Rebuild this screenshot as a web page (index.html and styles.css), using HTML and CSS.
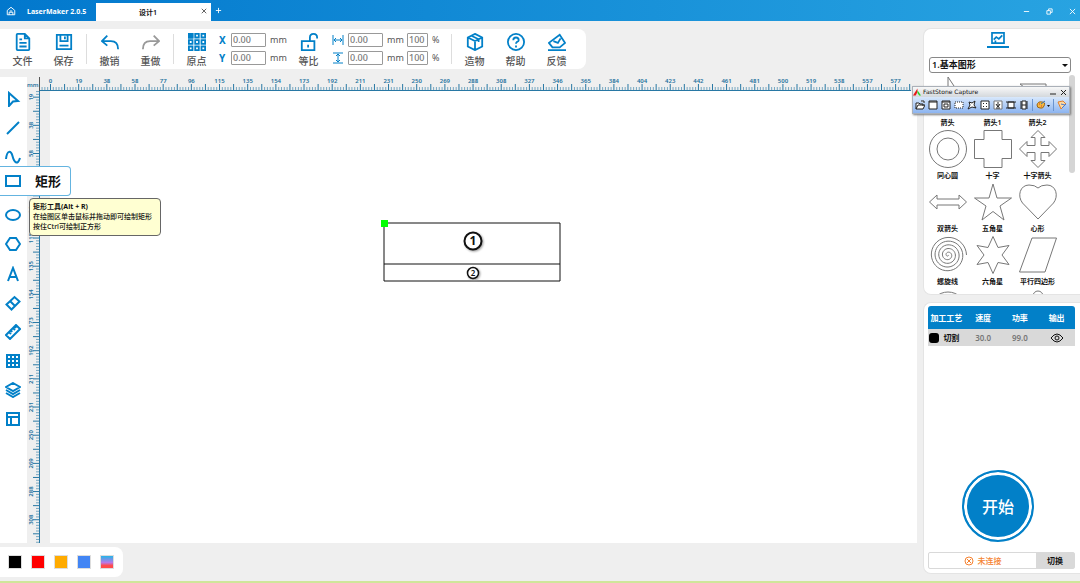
FILE: index.html
```html
<!DOCTYPE html>
<html lang="zh-CN">
<head>
  <meta charset="UTF-8">
  <title>LaserMaker 2.0.5</title>
  <link rel="stylesheet" href="styles.css">
</head>
<body>
<header class="titlebar">
  <svg class="home" viewBox="0 0 16 16"><path d="M2 7l6-5 6 5v7H2zM5 14v-4h6v4M6 8h4"/></svg>
  <h1>LaserMaker 2.0.5</h1>
  <div class="tab">
    <span>设计1</span>
    <button class="tab-close" aria-label="关闭标签"><svg viewBox="0 0 8 8"><path d="M1 1l6 6M7 1L1 7"/></svg></button>
  </div>
  <button class="tab-add" aria-label="新建"><svg viewBox="0 0 8 8"><path d="M4 1v6M1 4h6"/></svg></button>
  <div class="window-buttons">
    <button aria-label="最小化"><svg viewBox="0 0 8 8"><path d="M1 4h6"/></svg></button>
    <button aria-label="还原"><svg viewBox="0 0 8 8"><path d="M1 3h4v4H1zM3 3V1h4v4H5"/></svg></button>
    <button aria-label="关闭"><svg viewBox="0 0 8 8"><path d="M1 1l6 6M7 1L1 7"/></svg></button>
  </div>
</header>

<div class="app">
  <main class="editor">
    <div class="toolbar">
      <button class="tool"><svg viewBox="0 0 20 20"><path d="M3 2q0-1 1-1h8l5 5v12q0 1-1 1H4q-1 0-1-1zM12 1v5h5M6 7h3M6 11h8M6 15h8"/></svg>文件</button>
      <button class="tool"><svg viewBox="0 0 20 20"><path d="M2 2h16v16H2zM6 2v7h8V2M11 4v3M5 14h10"/></svg>保存</button>
      <span class="sep"></span>
      <button class="tool"><svg viewBox="0 0 20 20"><path d="M7 3L1 9l6 5M1 9h10q8 0 8 9"/></svg>撤销</button>
      <button class="tool redo"><svg viewBox="0 0 20 20"><path d="M13 3l6 6-6 5M19 9H9q-8 0-8 9"/></svg>重做</button>
      <span class="sep"></span>
      <button class="tool"><svg viewBox="0 0 20 20"><path class="solid" d="M1 1h4v4H1z"/><path d="M1 1h4v4H1zM8 1h4v4H8zM15 1h4v4h-4zM1 8h4v4H1zM8 8h4v4H8zM15 8h4v4h-4zM1 15h4v4H1zM8 15h4v4H8zM15 15h4v4h-4z"/></svg>原点</button>
      <div class="fields position">
        <label for="pos-x">X</label><input id="pos-x" value="0.00"><span>mm</span>
        <label for="pos-y">Y</label><input id="pos-y" value="0.00"><span>mm</span>
      </div>
      <button class="tool"><svg viewBox="0 0 20 20"><path d="M2 9h14v10H2zM9 13v3M11 9V5q0-4 4-4t4 4v1"/></svg>等比</button>
      <div class="fields size">
        <label for="width" aria-label="宽度"><svg viewBox="0 0 12 12"><path d="M1 1v10M11 1v10M2 6h8M4 4L2 6l2 2M8 4l2 2-2 2"/></svg></label>
        <input id="width" value="0.00"><span>mm</span><input class="percent" value="100" aria-label="宽度百分比"><span>%</span>
        <label for="height" aria-label="高度"><svg viewBox="0 0 12 12"><path d="M1 1h10M1 11h10M6 2v8M4 4l2-2 2 2M4 8l2 2 2-2"/></svg></label>
        <input id="height" value="0.00"><span>mm</span><input class="percent" value="100" aria-label="高度百分比"><span>%</span>
      </div>
      <span class="sep"></span>
      <button class="tool"><svg viewBox="0 0 20 20"><path d="M10 1l8 4v10l-8 4-8-4V5zM2 5l8 4 8-4M10 9v10M6 3l8 4v3"/></svg>造物</button>
      <button class="tool"><svg viewBox="0 0 20 20"><circle cx="10" cy="10" r="9"/><path d="M7 8q0-3 3-3t3 3q0 1-2 2-1 1-1 2M10 14v2"/></svg>帮助</button>
      <button class="tool"><svg viewBox="0 0 20 20"><path d="M0 19h20M5 16l-4-5L13 2l6 9-6 5zM6 9l5 2 3-5"/></svg>反馈</button>
    </div>

    <div class="workspace">
      <nav class="side-tools">
        <button aria-label="选择"><svg viewBox="0 0 16 16"><path d="M4 2l9 8-5 .5L4 15z"/></svg></button>
        <button aria-label="直线"><svg viewBox="0 0 16 16"><path d="M2 14L14 2"/></svg></button>
        <button aria-label="曲线"><svg viewBox="0 0 16 16"><path d="M1 10C2 1 6 1 7.500 7s5 10 7.500 2"/></svg></button>
        <div class="active-tool">
          <button class="flyout"><svg viewBox="0 0 16 16"><path d="M1 3h14v10H1z"/></svg>矩形</button>
          <div class="tooltip" role="tooltip">
            <strong>矩形工具(Alt + R)</strong>
            <p>在绘图区单击鼠标并拖动即可绘制矩形</p>
            <p>按住Ctrl可绘制正方形</p>
          </div>
        </div>
        <button aria-label="椭圆"><svg viewBox="0 0 16 16"><ellipse cx="8" cy="8" rx="7" ry="5"/></svg></button>
        <button aria-label="多边形"><svg viewBox="0 0 16 16"><path d="M1 8l4-6h6l4 6-4 6H5z"/></svg></button>
        <button aria-label="文字"><svg viewBox="0 0 16 16"><path d="M3 15L8 2l5 13M5 11h6"/></svg></button>
        <button aria-label="橡皮擦"><svg viewBox="0 0 16 16"><path d="M1.500 9.500L9.500 2l5 4.500-8 8zM5 6l5 5"/></svg></button>
        <button aria-label="测量"><svg viewBox="0 0 16 16"><path d="M1 11L11 1l4 4L5 15zM4 8l2 2M6 6l1 2M8 4l2 2M10 2l1 2"/></svg></button>
        <button aria-label="阵列"><svg viewBox="0 0 16 16"><path d="M2 2h12v12H2zM6 2v12M10 2v12M2 6h12M2 10h12"/></svg></button>
        <button aria-label="图层"><svg viewBox="0 0 16 16"><path d="M8 1l7 4-7 4-7-4zM1 8l7 4 7-4M1 11l7 4 7-4"/></svg></button>
        <button aria-label="布局"><svg viewBox="0 0 16 16"><path d="M2 2h12v12H2zM2 6h12M6 6v8"/></svg></button>
      </nav>
      <div class="unit">mm</div>
      <svg class="ruler ruler-h" id="rulerH"></svg>
      <svg class="ruler ruler-v" id="rulerV"></svg>
      <div class="canvas">
        <div class="page">
          <svg class="drawing" viewBox="0 0 184 66">
            <path class="outline" d="M4 4h176v58H4zM4 45h176"/>
            <path class="handle" d="M1 1h7v7H1z"/>
            <g class="marker marker-big"><circle cx="93" cy="22" r="8.500"/><text x="93" y="26">1</text></g>
            <g class="marker"><circle cx="93" cy="54" r="5.500"/><text x="93" y="57">2</text></g>
          </svg>
        </div>
      </div>
    </div>

    <div class="palette">
      <button class="swatch black" aria-label="黑色"></button>
      <button class="swatch red" aria-label="红色"></button>
      <button class="swatch orange" aria-label="橙色"></button>
      <button class="swatch blue" aria-label="蓝色"></button>
      <button class="swatch mixed" aria-label="更多颜色"></button>
    </div>
  </main>

  <aside class="sidebar">
    <section class="panel library">
      <button class="library-tab" aria-label="图库"><svg viewBox="0 0 16 14"><path d="M1 1h14v12H1zM3 9l3-3 3 2 4-4M4 11h2"/></svg></button>
      <select class="category" aria-label="图库分类"><option>1.基本图形</option></select>
      <div class="shapes">
        <figure><svg viewBox="0 0 38 38"><path d="M19 0v28l6-7h8z"/></svg><figcaption>箭头</figcaption></figure>
        <figure><svg viewBox="0 0 38 38"><path d="M1 24l12-7v4h24v6H13v4z"/></svg><figcaption>箭头1</figcaption></figure>
        <figure><svg viewBox="0 0 38 38"><path d="M1 7h26v12h8l-13 15L9 19h8z"/></svg><figcaption>箭头2</figcaption></figure>
        <figure><svg viewBox="0 0 38 38"><circle cx="19" cy="19" r="18.500"/><circle cx="19" cy="19" r="11"/></svg><figcaption>同心圆</figcaption></figure>
        <figure><svg viewBox="0 0 38 38"><path d="M10 .5h18v9h9.500v19H28v9H10v-9H.5v-19H10z"/></svg><figcaption>十字</figcaption></figure>
        <figure><svg viewBox="0 0 38 38"><path d="M19 .5l7 7h-4v8h8v-4l7.500 7.500-7.500 7.500v-4h-8v8h4l-7 7-7-7h4v-8H8v4L.5 19 8 11.500v4h8v-8h-4z"/></svg><figcaption>十字箭头</figcaption></figure>
        <figure><svg viewBox="0 0 38 38"><path d="M.5 19L8 12v4h22v-4l7.500 7-7.500 7v-4H8v4z"/></svg><figcaption>双箭头</figcaption></figure>
        <figure><svg viewBox="0 0 38 38"><path d="M19 1l4 14h14.500L26 23l4 14-11-8.500L8 37l4-14L.5 15H15z"/></svg><figcaption>五角星</figcaption></figure>
        <figure><svg viewBox="0 0 38 38"><path d="M19 36L3.500 20C-2 13 1 2 10 2q6 0 9 3 3-3 9-3c9 0 12 11 6.500 18z"/></svg><figcaption>心形</figcaption></figure>
        <figure><svg viewBox="0 0 38 38"><path id="spiral"/></svg><figcaption>螺旋线</figcaption></figure>
        <figure><svg viewBox="0 0 38 38"><path d="M19 .5l5 11 11-2-7 9.500 7 9.500-11-2-5 11-5-11-11 2 7-9.500-7-9.500 11 2z"/></svg><figcaption>六角星</figcaption></figure>
        <figure><svg viewBox="0 0 38 38"><path d="M13 2h24.500L26 36H.5z"/></svg><figcaption>平行四边形</figcaption></figure>
        <figure><svg viewBox="0 0 38 38"><circle cx="19" cy="21" r="18"/></svg></figure>
        <figure></figure>
        <figure><svg viewBox="0 0 38 38"><circle cx="19" cy="7" r="5"/></svg></figure>
      </div>
      <span class="scroll-thumb"></span>
    </section>

    <section class="panel process">
      <table>
        <thead><tr><th>加工工艺</th><th>速度</th><th>功率</th><th>输出</th></tr></thead>
        <tbody><tr>
          <td class="layer"><i></i>切割</td><td>30.0</td><td>99.0</td>
          <td><svg class="eye" viewBox="0 0 14 10"><path d="M1 5q6-8 12 0-6 8-12 0z"/><circle cx="7" cy="5" r="2"/></svg></td>
        </tr></tbody>
      </table>
      <button class="start">开始</button>
      <div class="connection">
        <span class="status"><svg viewBox="0 0 10 10"><circle cx="5" cy="5" r="4"/><path d="M3 3l4 4M7 3L3 7"/></svg>未连接</span>
        <button class="switch">切换</button>
      </div>
    </section>
  </aside>
</div>

<div class="capture">
  <div class="capture-title">
    <svg viewBox="0 0 9 8"><path fill="#e81818" d="M0 8l5-8v4L3 8z"/><path fill="#25d325" d="M5 2l4 6H7L5 5z"/></svg>
    <span>FastStone Capture</span>
    <button aria-label="最小化"><svg viewBox="0 0 8 8"><path d="M1 6h6"/></svg></button>
    <button aria-label="关闭"><svg viewBox="0 0 8 8"><path d="M2 2l5 5M7 2L2 7"/></svg></button>
  </div>
  <div class="capture-tools">
    <button aria-label="打开"><svg viewBox="0 0 10 10"><path fill="#fff" d="M1 9V3h3l1 1h3v2M1 9l2-4h7L8 9zM6 1h3v2"/></svg></button>
    <button aria-label="活动窗口"><svg viewBox="0 0 10 10"><path fill="#fff" d="M1 1h8v8H1zM1 2h8"/></svg></button>
    <button aria-label="窗口对象"><svg viewBox="0 0 10 10"><path fill="#fff" d="M1 1h8v8H1zM1 2h8M3 4h4v3H3z"/></svg></button>
    <button aria-label="矩形区域"><svg viewBox="0 0 10 10"><path fill="#fff" stroke-dasharray="1 1" d="M1 2h8v6H1z"/></svg></button>
    <button aria-label="手绘区域"><svg viewBox="0 0 10 10"><path fill="#fff" d="M2 2l3 1 3-2-1 4 2 3-4-1-4 2 2-4z"/></svg></button>
    <button aria-label="全屏"><svg viewBox="0 0 10 10"><path fill="#fff" d="M1 1h8v8H1zM3 3l1 1M7 3L6 4M3 7l1-1M7 7L6 6"/></svg></button>
    <button aria-label="滚动窗口"><svg viewBox="0 0 10 10"><path fill="#fff" stroke="#777" d="M1 1h8v8H1z"/><path d="M5 2v5M3 4l2 3 2-3M3 8h4"/></svg></button>
    <button aria-label="固定区域"><svg viewBox="0 0 10 10"><path fill="#fff" d="M2 2h6v6H2z"/><path d="M0 2h10M0 8h10"/></svg></button>
    <button aria-label="录像"><svg viewBox="0 0 10 10"><path fill="#fff" d="M3 1h4v8H3z"/><path d="M2 1v8M8 1v8M3 5h4"/></svg></button>
    <span class="capture-sep"></span>
    <button class="output" aria-label="输出"><svg viewBox="0 0 14 10"><path fill="#f5b93d" stroke="#9b6318" d="M1 5q1-4 5-3 4 0 2 4-1 3-4 2-3 0-3-3z"/><path stroke="#d33" d="M3 4h1M5 6h1"/><path stroke="#37b" d="M5 4l4-3"/><path fill="#111" stroke="none" d="M11 5h3l-1.500 2z"/></svg></button>
    <span class="capture-sep"></span>
    <button aria-label="设置"><svg viewBox="0 0 10 10"><path fill="#ffd9a0" stroke="#e08030" d="M1 2l5-1 3 3-5 5z"/><path stroke="#4b78c8" d="M4 4l4 1M5 8l4-4"/></svg></button>
  </div>
</div>

<script src="ruler.js"></script>
</body>
</html>
```
FILE: styles.css
```css
* {
  box-sizing: border-box;
}

body {
  margin: 0;
  min-height: 100vh;
  display: flex;
  flex-direction: column;
  background: #efefef;
  border-bottom: 2px solid #cfe69a;
  font-family: "Noto Sans", "Noto Sans CJK SC", sans-serif;
  font-size: 8px;
  color: #111;
  overflow: hidden;
}

button {
  padding: 0;
  border: none;
  background: none;
  font: inherit;
  color: inherit;
  cursor: pointer;
}

svg {
  display: block;
  fill: none;
  stroke: #0280c8;
}

h1, p, figure {
  margin: 0;
}

/* title bar */
.titlebar {
  display: flex;
  align-items: center;
  height: 21px;
  padding-left: 6px;
  background: linear-gradient(90deg, #0278cd, #28a3e1);
  color: #fff;
}

.titlebar svg {
  width: 7px;
  height: 7px;
  stroke: #fff;
}

.titlebar .home {
  width: 10px;
  height: 10px;
  stroke-width: 1.5;
}

.titlebar h1 {
  width: 80px;
  padding: 2px 0 0 11px;
  font-size: 7px;
  font-weight: 700;
  white-space: nowrap;
}

.tab {
  position: relative;
  align-self: flex-end;
  display: flex;
  align-items: center;
  justify-content: center;
  width: 115px;
  height: 18px;
  padding-right: 11px;
  background: #fff;
  color: #111;
  font-size: 7px;
  font-weight: 600;
}

.tab-close {
  position: absolute;
  top: 5px;
  right: 4px;
}

.tab-close svg {
  width: 6px;
  height: 6px;
  stroke: #333;
}

.tab-add {
  margin-left: 4px;
}

.window-buttons {
  display: flex;
  gap: 16px;
  margin-left: auto;
  padding: 2px 4px 0 0;
}

/* main layout */
.app {
  flex: 1;
  display: flex;
}

.editor {
  flex: 1;
  min-width: 0;
  display: flex;
  flex-direction: column;
  padding: 8px 0 4px;
}

.toolbar {
  align-self: flex-start;
  display: flex;
  align-items: center;
  height: 40px;
  padding: 0 9px 0 2px;
  background: #fff;
  border-radius: 0 8px 8px 0;
  color: #555;
}

.tool {
  display: flex;
  flex-direction: column;
  align-items: center;
  gap: 3px;
  width: 41px;
  padding-top: 2px;
  font-size: 10px;
  line-height: 14px;
  font-weight: 500;
}

.tool svg {
  width: 18px;
  height: 18px;
  stroke-width: 2;
}

.tool .solid {
  fill: #0280c8;
}

.redo svg {
  stroke: #999;
}

.sep {
  width: 1px;
  height: 30px;
  margin: 0 2px;
  background: #ddd;
}

.fields {
  display: grid;
  align-items: center;
  gap: 4px;
  font-size: 9px;
  line-height: 14px;
}

.position {
  grid-template-columns: 8px 35px 18px;
  padding-left: 2px;
}

.size {
  grid-template-columns: 12px 35px 16px 21px 9px;
  padding: 0 8px 0 3px;
}

.fields label {
  color: #0280c8;
  font-size: 10px;
  font-weight: 700;
}

.fields svg {
  width: 12px;
  height: 12px;
}

.fields input {
  width: 100%;
  height: 14px;
  padding: 0 1px;
  border: 1px solid #999;
  border-radius: 1px;
  font: inherit;
  font-weight: 500;
  color: #777;
}

/* tools, rulers and canvas */
.workspace {
  flex: 1;
  display: grid;
  grid-template-columns: 27px 13px 1fr;
  grid-template-rows: 14px 1fr;
  margin-top: 8px;
}

.workspace::before {
  content: "";
  grid-area: 1 / 1 / 3 / 2;
  background: #fff;
}

.side-tools {
  grid-area: 1 / 1 / 3 / 2;
  display: grid;
  grid-auto-rows: 1fr;
  height: 350px;
  margin-top: 7px;
  padding-right: 1px;
}

.side-tools > button {
  display: grid;
  place-items: center;
}

.side-tools svg {
  width: 16px;
  height: 16px;
  stroke-width: 2;
}

.unit {
  grid-area: 1 / 2;
  padding-top: 2px;
  border-right: 1px solid #555;
  font-size: 6px;
  line-height: 12px;
  font-weight: 600;
  color: #24719e;
}

.ruler {
  width: 100%;
  height: 100%;
  stroke: #2878a4;
}

.ruler-h {
  grid-area: 1 / 3;
}

.ruler-v {
  grid-area: 2 / 2;
  height: 0;
  min-height: 100%;
}

.ruler text {
  fill: #24719e;
  stroke: none;
  font-size: 6px;
  font-weight: 600;
  text-anchor: middle;
}

.ruler .edge {
  stroke-width: 1;
}

.canvas {
  grid-area: 2 / 3;
  padding: 0 6px 0 10px;
}

.page {
  position: relative;
  height: 100%;
  background: #fff;
}

.drawing {
  position: absolute;
  left: 330px;
  top: 128px;
  width: 184px;
  height: 66px;
}

.outline {
  stroke: #111;
}

.handle {
  fill: #0f0;
  stroke: none;
}

.marker circle {
  fill: #fff;
  stroke: #111;
  stroke-width: 1.5;
  filter: drop-shadow(1px 1px 1px #999);
}

.marker text {
  fill: #111;
  stroke: none;
  font-size: 8px;
  font-weight: 600;
  text-anchor: middle;
}

.marker-big circle {
  stroke-width: 2;
}

.marker-big text {
  font-size: 12px;
  font-weight: 700;
}

.active-tool {
  position: relative;
  z-index: 2;
}

.flyout {
  position: absolute;
  top: -5px;
  left: 0;
  display: flex;
  align-items: center;
  gap: 14px;
  width: 71px;
  height: 30px;
  padding-left: 5px;
  background: #fff;
  border: 1px solid #64b4e0;
  border-left: none;
  border-radius: 0 4px 4px 0;
  font-size: 13px;
  line-height: 28px;
  font-weight: 700;
  white-space: nowrap;
}

.tooltip {
  position: absolute;
  top: 27px;
  left: 29px;
  min-width: 132px;
  padding: 3px;
  background: #ffffd2;
  border: 1px solid #666;
  border-radius: 4px;
  font-size: 7px;
  line-height: 10px;
  font-weight: 500;
  white-space: nowrap;
}

.tooltip strong {
  display: block;
}

/* colour palette */
.palette {
  align-self: flex-start;
  display: flex;
  align-items: center;
  gap: 9px;
  height: 30px;
  margin-top: 4px;
  padding: 0 9px 0 8px;
  background: #fff;
  border-radius: 0 8px 8px 0;
}

.swatch {
  width: 14px;
  height: 14px;
  border: 1px solid #ddd;
}

.black { background: #000; }
.red { background: #f00; }
.orange { background: #ffab00; }
.blue { background: #4285f4; }
.mixed { background: linear-gradient(#25b5e8, #b978e8 55%, #ff4b4b 80%); }

/* right side */
.sidebar {
  width: 157px;
  display: flex;
  flex-direction: column;
  gap: 7px;
  padding: 7px 0;
}

.panel {
  background: #fff;
  border: 1px solid #e4e4e4;
  border-right: none;
  border-radius: 8px 0 0 8px;
}

.library {
  position: relative;
  height: 267px;
  overflow: hidden;
  padding: 3px 9px 0 5px;
}

.library-tab {
  display: block;
  margin: 0 auto 9px 58px;
  padding: 0 4px 2px;
  border-bottom: 2px solid #0280c8;
}

.library-tab svg {
  width: 14px;
  height: 12px;
  stroke-width: 2;
}

.category {
  display: block;
  width: 100%;
  height: 16px;
  padding: 0 2px;
  appearance: none;
  border: 1px solid #888;
  border-radius: 3px;
  background: #fff;
  font: 600 9px/14px "Noto Sans", "Noto Sans CJK SC", sans-serif;
  color: #111;
}

/* arrow of the category list */
.library::after {
  content: "";
  position: absolute;
  top: 35px;
  right: 12px;
  border: 3px solid transparent;
  border-top-color: #111;
  border-bottom: none;
}

.shapes {
  display: grid;
  grid-template-columns: repeat(3, 45px);
  grid-auto-rows: 53px;
  margin: 4px 0 0 -4px;
}

.shapes figure {
  display: flex;
  flex-direction: column;
  align-items: center;
}

.shapes svg {
  width: 38px;
  height: 38px;
  stroke: #777;
}

.shapes figcaption {
  font-size: 7px;
  line-height: 15px;
  font-weight: 600;
  white-space: nowrap;
}

.scroll-thumb {
  position: absolute;
  top: 46px;
  right: 5px;
  width: 6px;
  height: 98px;
  border-radius: 3px;
  background: #d5d5d5;
}

.process {
  flex: 1;
  display: flex;
  flex-direction: column;
  padding: 3px 5px 4px 4px;
}

.process table {
  width: 100%;
  table-layout: fixed;
  border-collapse: collapse;
  text-align: center;
}

.process th {
  height: 23px;
  padding: 0;
  background: #0280c8;
  color: #fff;
  font-size: 8px;
  font-weight: 600;
  white-space: nowrap;
}

.process th:first-child {
  border-radius: 3px 0 0 0;
}

.process th:last-child {
  border-radius: 0 3px 0 0;
}

.process td {
  height: 17px;
  padding: 0;
  background: #d9d9d9;
  color: #777;
  font-weight: 600;
}

.process td.layer {
  padding-right: 4px;
  color: #111;
  font-weight: 700;
  white-space: nowrap;
}

.layer i {
  display: inline-block;
  width: 10px;
  height: 10px;
  margin-right: 4px;
  border-radius: 3px;
  background: #000;
  vertical-align: middle;
}

.eye {
  width: 14px;
  height: 10px;
  margin: 0 auto;
  stroke: #111;
}

.start {
  align-self: center;
  width: 72px;
  height: 72px;
  margin: auto 7px 10px 0;
  border: 2px solid #0280c8;
  border-radius: 50%;
  background: #0280c8;
  box-shadow: inset 0 0 0 3px #fff;
  color: #fff;
  font-size: 16px;
  font-weight: 500;
}

.connection {
  display: flex;
  height: 17px;
  border: 1px solid #d9d9d9;
  border-radius: 2px;
}

.status {
  flex: 1;
  display: flex;
  align-items: center;
  justify-content: center;
  gap: 4px;
  color: #f58230;
  font-weight: 500;
}

.status svg {
  width: 10px;
  height: 10px;
  stroke: #f58230;
}

.switch {
  width: 38px;
  background: #d9d9d9;
  font-weight: 700;
}

/* floating capture window */
.capture {
  position: absolute;
  top: 86px;
  right: 10px;
  width: 158px;
  border: 1px solid #aab0b8;
  background: #eee;
  box-shadow: 1px 1px 2px #777;
}

.capture svg {
  stroke: #222;
}

.capture-title {
  display: flex;
  align-items: center;
  gap: 2px;
  height: 10px;
  padding-right: 2px;
  background: linear-gradient(#f8f8f8, #d4d8dc);
  font-family: "DejaVu Sans", sans-serif;
  font-size: 6px;
  line-height: 8px;
}

.capture-title svg {
  width: 8px;
  height: 8px;
}

.capture-title > svg {
  stroke: none;
}

.capture-title span {
  flex: 1;
}

.capture-tools {
  display: flex;
  align-items: center;
  gap: 3px;
  height: 16px;
  padding-left: 2px;
  background: linear-gradient(#d8e8fc, #8cb4f0);
}

.capture-tools svg {
  width: 10px;
  height: 10px;
}

.output svg {
  width: 14px;
}

.capture-sep {
  width: 1px;
  height: 12px;
  background: #6b94cf;
}
```
FILE: ruler.js
```js
const labels = [0, 19, 38, 58, 77, 96, 115, 135, 154, 173, 192, 211, 231, 250, 269, 288,
  308, 327, 346, 365, 384, 404, 423, 442, 461, 481, 500, 519, 538, 557, 577];
const step = 28.17;

function tickLength(i) {
  return i % 5 === 0 ? 6 : 3;
}

function drawHorizontal() {
  const start = 10.5;
  let marks = '';
  for (let i = -3; i <= 305; i++) {
    const x = start + i * step / 10;
    marks += `<path opacity="${i % 5 ? 0.6 : 1}" d="M${x} 13V${13 - tickLength(i)}"/>`;
  }
  labels.forEach((label, i) => {
    marks += `<text x="${start + i * step}" y="6">${label}</text>`;
  });
  document.getElementById('rulerH').innerHTML = marks + '<path class="edge" d="M0 13.5H871"/>';
}

function drawVertical() {
  const start = -22;
  let marks = '';
  for (let i = 8; i <= 168; i++) {
    const y = start + i * step / 10;
    marks += `<path opacity="${i % 5 ? 0.6 : 1}" d="M12 ${y}H${12 - tickLength(i)}"/>`;
  }
  labels.slice(1, 17).forEach((label, i) => {
    const y = start + (i + 1) * step;
    marks += `<text transform="translate(6 ${y}) rotate(-90)">${label}</text>`;
  });
  document.getElementById('rulerV').innerHTML = marks + '<path class="edge" d="M12.5 0V1000"/>';
}

function drawSpiral() {
  const turns = 5;
  const points = [];
  for (let a = 0; a <= turns * 360; a += 10) {
    const r = 18.5 * a / (turns * 360);
    const angle = a * Math.PI / 180;
    points.push(`${19 + r * Math.cos(angle)} ${19 + r * Math.sin(angle)}`);
  }
  document.getElementById('spiral').setAttribute('d', 'M' + points.join('L'));
}

drawHorizontal();
drawVertical();
drawSpiral();
```
